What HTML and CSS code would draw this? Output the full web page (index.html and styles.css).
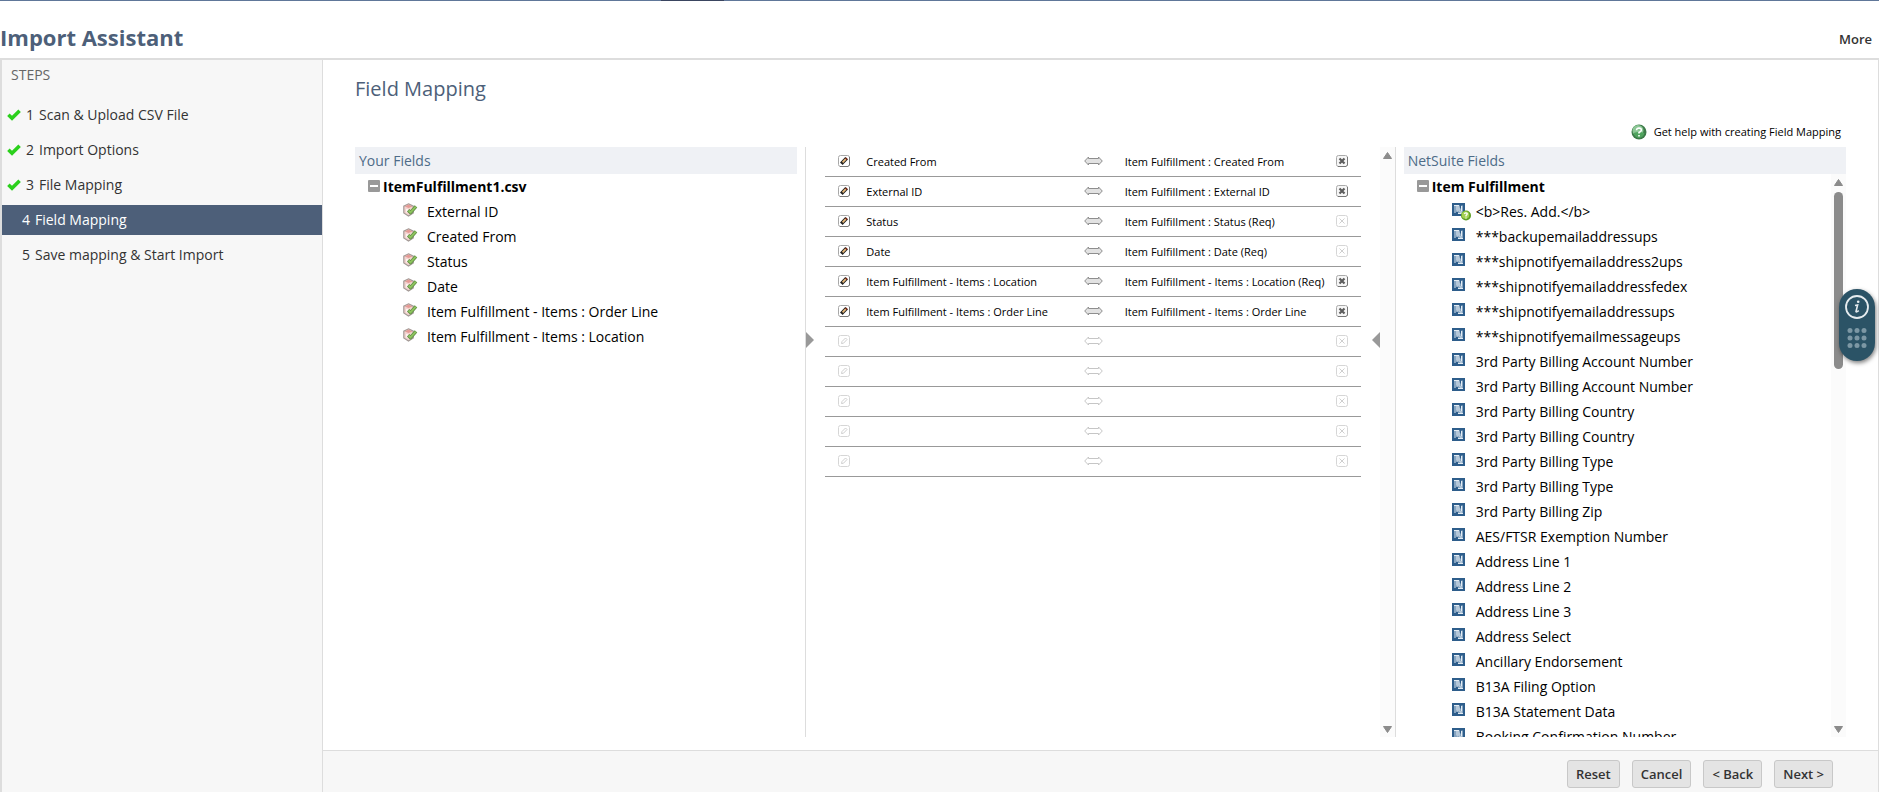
FILE: index.html
```html
<!DOCTYPE html>
<html lang="en">
<head>
    <meta charset="UTF-8">
    <title>Import Assistant</title>
    <link rel="stylesheet" href="styles.css">
</head>
<body>

    <!-- shared icons -->
    <svg class="sprite" width="0" height="0">
        <symbol id="check" viewBox="0 0 14 12">
            <path d="M1.4 5.8 L5 9.2 L12.6 1.8" fill="none" stroke="#2bd01c" stroke-width="3.6"/>
        </symbol>
        <symbol id="minus" viewBox="0 0 12 12">
            <rect width="12" height="12" rx="1" fill="#999"/>
            <rect x="2" y="5" width="8" height="2" fill="#fff"/>
        </symbol>
        <symbol id="mapped" viewBox="0 0 15 14">
            <path d="M5.5 .8 L10.3 3.2 V10 L5.5 13 L.8 10 V3.2 Z" fill="#f3d3cf" stroke="#a39a96" stroke-width="1.2"/>
            <path d="M1.8 3.6 L5.5 1.6 L9.4 3.6 L5.5 5 Z" fill="#e59a95"/>
            <path d="M4 6 V9.500" stroke="#fff" stroke-width="1.4"/>
            <path d="M5.200 7.200 L7.500 9.600 L13 3.400" fill="none" stroke="#5f8f45" stroke-width="3.400" stroke-linejoin="round"/>
            <path d="M5.600 7.500 L7.500 9.400 L12.800 3.600" fill="none" stroke="#8fc45f" stroke-width="1.800"/>
        </symbol>
        <symbol id="ns" viewBox="0 0 13 13">
            <rect width="13" height="13" fill="#2d5d8b"/>
            <path d="M2 2 H7 V4 L9 6 V2.500 H11 V11 H6 V9 L4 7 V10 H2 Z" fill="#86a4c0"/>
            <path d="M2 2.500 H7 V7.500 L10 10.500 M5 3 V9 M9.500 3 V8.500 M6 10.500 H11" fill="none" stroke="#e3ebf2"/>
        </symbol>
        <symbol id="ns-help" viewBox="0 0 19 18">
            <use href="#ns" width="13" height="13"/>
            <circle cx="14" cy="12.500" r="5" fill="#5d9e22"/>
            <circle cx="13.500" cy="12" r="3.800" fill="#a3d050"/>
            <path d="M12.200 10.800 Q14 9 15.200 10.500 Q15.300 11.600 14 12.600 V13.500 M14 14.500 V15.600" fill="none" stroke="#fff" stroke-width="1.3"/>
        </symbol>
        <symbol id="edit" viewBox="0 0 12 12">
            <rect x=".5" y=".5" width="11" height="11" rx="2" fill="#fff" stroke="#a8a8a8"/>
            <path d="M2 11.500 H10 L11.500 10 V2" fill="none" stroke="#777"/>
            <path d="M3.300 8.800 L8.600 3.200" stroke="#222" stroke-width="3.600"/>
            <path d="M4.600 7.400 L8 3.900" stroke="#e8b878" stroke-width="1.800"/>
            <path d="M7.600 3 L9.200 4.600" stroke="#7c1f10" stroke-width="1.400"/>
        </symbol>
        <symbol id="edit-off" viewBox="0 0 12 12">
            <rect x=".5" y=".5" width="11" height="11" rx="2" fill="#fff" stroke="#d6d6d6"/>
            <path d="M3.500 8.500 L4 6.500 L7.500 3 L9 4.500 L5.500 8.200 Z" fill="none" stroke="#cfcfcf"/>
        </symbol>
        <symbol id="arrows" viewBox="0 0 19 10">
            <path d="M.7 5 L4.500 1 V2.500 H14.500 V1 L18.300 5 L14.500 9 V7.500 H4.500 V9 Z" fill="#e2e2e2" stroke="#8e8e8e"/>
        </symbol>
        <symbol id="arrows-off" viewBox="0 0 19 10">
            <path d="M.7 5 L4.500 1 V2.500 H14.500 V1 L18.300 5 L14.500 9 V7.500 H4.500 V9 Z" fill="#fff" stroke="#c6c6c6"/>
        </symbol>
        <symbol id="remove" viewBox="0 0 12 12">
            <rect x=".5" y=".5" width="11" height="11" rx="2" fill="#f6f6f6" stroke="#aaa"/>
            <path d="M2 11.500 H10 L11.500 10 V2" fill="none" stroke="#777"/>
            <path d="M3.500 3.500 L8.500 8.500 M8.500 3.500 L3.500 8.500" stroke="#5c5c5c" stroke-width="2.200"/>
        </symbol>
        <symbol id="remove-off" viewBox="0 0 12 12">
            <rect x=".5" y=".5" width="11" height="11" rx="2" fill="#fff" stroke="#d6d6d6"/>
            <path d="M3.500 3.500 L8.500 8.500 M8.500 3.500 L3.500 8.500" stroke="#cfcfcf"/>
        </symbol>
        <symbol id="scroll-up" viewBox="0 0 9 7">
            <path d="M4.500 .5 L8.500 6.500 H.5 Z" fill="#8b8b8b" stroke="#8b8b8b" stroke-linejoin="round"/>
        </symbol>
        <symbol id="scroll-down" viewBox="0 0 9 7">
            <path d="M4.500 6.500 L8.500 .5 H.5 Z" fill="#8b8b8b" stroke="#8b8b8b" stroke-linejoin="round"/>
        </symbol>
    </svg>

    <div class="nav-strip"><div class="nav-active"></div></div>

    <header class="page-header">
        <h1>Import Assistant</h1>
        <a class="more" href="#">More</a>
    </header>

    <div class="assistant">
        <nav class="steps">
            <h2>STEPS</h2>
            <a class="step" href="#"><svg class="check"><use href="#check"/></svg><span>1</span>Scan &amp; Upload CSV File</a>
            <a class="step" href="#"><svg class="check"><use href="#check"/></svg><span>2</span>Import Options</a>
            <a class="step" href="#"><svg class="check"><use href="#check"/></svg><span>3</span>File Mapping</a>
            <a class="step todo active" href="#"><span>4</span>Field Mapping</a>
            <a class="step todo" href="#"><span>5</span>Save mapping &amp; Start Import</a>
        </nav>

        <div class="content">
            <main class="mapping">
                <h2 class="title">Field Mapping</h2>
                <a class="help" href="#">
                    <svg width="16" height="16" viewBox="0 0 16 16">
                        <circle cx="8" cy="8" r="7.5" fill="#3c7a48"/>
                        <circle cx="7" cy="6.500" r="5.500" fill="#8cc795"/>
                        <path d="M2.500 9 Q8 7 13.500 9 Q12.500 13.500 8 14 Q3.500 13.500 2.500 9" fill="#4fa35d"/>
                        <path d="M5.500 6.200 Q5.700 4 8 4 Q10.500 4.200 10.300 6.200 Q10 7.500 8 8.500 V9.600 M8 11 V12.600" fill="none" stroke="#fff" stroke-width="1.600"/>
                    </svg>
                    Get help with creating Field Mapping
                </a>

                <div class="columns">
                    <section class="panel">
                        <h3>Your Fields</h3>
                        <ul class="tree">
                            <li class="root"><svg class="toggle"><use href="#minus"/></svg>ItemFulfillment1.csv</li>
                            <li><svg class="mapped"><use href="#mapped"/></svg>External ID</li>
                            <li><svg class="mapped"><use href="#mapped"/></svg>Created From</li>
                            <li><svg class="mapped"><use href="#mapped"/></svg>Status</li>
                            <li><svg class="mapped"><use href="#mapped"/></svg>Date</li>
                            <li><svg class="mapped"><use href="#mapped"/></svg>Item Fulfillment - Items : Order Line</li>
                            <li><svg class="mapped"><use href="#mapped"/></svg>Item Fulfillment - Items : Location</li>
                        </ul>
                    </section>

                    <section class="map-panel">
                        <div class="map-body">
                            <table class="map">
                                <colgroup><col class="c-edit"><col><col class="c-arrow"><col class="c-target"><col class="c-remove"></colgroup>
                                <tr>
                                    <td><button aria-label="Edit"><svg><use href="#edit"/></svg></button></td>
                                    <td>Created From</td>
                                    <td><svg class="arrows"><use href="#arrows"/></svg></td>
                                    <td>Item Fulfillment : Created From</td>
                                    <td><button aria-label="Remove"><svg><use href="#remove"/></svg></button></td>
                                </tr>
                                <tr>
                                    <td><button aria-label="Edit"><svg><use href="#edit"/></svg></button></td>
                                    <td>External ID</td>
                                    <td><svg class="arrows"><use href="#arrows"/></svg></td>
                                    <td>Item Fulfillment : External ID</td>
                                    <td><button aria-label="Remove"><svg><use href="#remove"/></svg></button></td>
                                </tr>
                                <tr>
                                    <td><button aria-label="Edit"><svg><use href="#edit"/></svg></button></td>
                                    <td>Status</td>
                                    <td><svg class="arrows"><use href="#arrows"/></svg></td>
                                    <td>Item Fulfillment : Status (Req)</td>
                                    <td><button aria-label="Remove" disabled><svg><use href="#remove-off"/></svg></button></td>
                                </tr>
                                <tr>
                                    <td><button aria-label="Edit"><svg><use href="#edit"/></svg></button></td>
                                    <td>Date</td>
                                    <td><svg class="arrows"><use href="#arrows"/></svg></td>
                                    <td>Item Fulfillment : Date (Req)</td>
                                    <td><button aria-label="Remove" disabled><svg><use href="#remove-off"/></svg></button></td>
                                </tr>
                                <tr>
                                    <td><button aria-label="Edit"><svg><use href="#edit"/></svg></button></td>
                                    <td>Item Fulfillment - Items : Location</td>
                                    <td><svg class="arrows"><use href="#arrows"/></svg></td>
                                    <td>Item Fulfillment - Items : Location (Req)</td>
                                    <td><button aria-label="Remove"><svg><use href="#remove"/></svg></button></td>
                                </tr>
                                <tr>
                                    <td><button aria-label="Edit"><svg><use href="#edit"/></svg></button></td>
                                    <td>Item Fulfillment - Items : Order Line</td>
                                    <td><svg class="arrows"><use href="#arrows"/></svg></td>
                                    <td>Item Fulfillment - Items : Order Line</td>
                                    <td><button aria-label="Remove"><svg><use href="#remove"/></svg></button></td>
                                </tr>
                                <tr>
                                    <td><button aria-label="Edit" disabled><svg><use href="#edit-off"/></svg></button></td>
                                    <td></td>
                                    <td><svg class="arrows"><use href="#arrows-off"/></svg></td>
                                    <td></td>
                                    <td><button aria-label="Remove" disabled><svg><use href="#remove-off"/></svg></button></td>
                                </tr>
                                <tr>
                                    <td><button aria-label="Edit" disabled><svg><use href="#edit-off"/></svg></button></td>
                                    <td></td>
                                    <td><svg class="arrows"><use href="#arrows-off"/></svg></td>
                                    <td></td>
                                    <td><button aria-label="Remove" disabled><svg><use href="#remove-off"/></svg></button></td>
                                </tr>
                                <tr>
                                    <td><button aria-label="Edit" disabled><svg><use href="#edit-off"/></svg></button></td>
                                    <td></td>
                                    <td><svg class="arrows"><use href="#arrows-off"/></svg></td>
                                    <td></td>
                                    <td><button aria-label="Remove" disabled><svg><use href="#remove-off"/></svg></button></td>
                                </tr>
                                <tr>
                                    <td><button aria-label="Edit" disabled><svg><use href="#edit-off"/></svg></button></td>
                                    <td></td>
                                    <td><svg class="arrows"><use href="#arrows-off"/></svg></td>
                                    <td></td>
                                    <td><button aria-label="Remove" disabled><svg><use href="#remove-off"/></svg></button></td>
                                </tr>
                                <tr>
                                    <td><button aria-label="Edit" disabled><svg><use href="#edit-off"/></svg></button></td>
                                    <td></td>
                                    <td><svg class="arrows"><use href="#arrows-off"/></svg></td>
                                    <td></td>
                                    <td><button aria-label="Remove" disabled><svg><use href="#remove-off"/></svg></button></td>
                                </tr>
                            </table>
                            <span class="pointer left"></span>
                            <span class="pointer right"></span>
                        </div>
                        <div class="scrollbar">
                            <svg><use href="#scroll-up"/></svg>
                            <svg><use href="#scroll-down"/></svg>
                        </div>
                    </section>

                    <section class="panel">
                        <h3>NetSuite Fields</h3>
                        <div class="scroll-box">
                            <ul class="tree">
                                <li class="root"><svg class="toggle"><use href="#minus"/></svg>Item Fulfillment</li>
                                <li><svg class="ns-help"><use href="#ns-help"/></svg>&lt;b&gt;Res. Add.&lt;/b&gt;</li>
                                <li><svg class="ns"><use href="#ns"/></svg>***backupemailaddressups</li>
                                <li><svg class="ns"><use href="#ns"/></svg>***shipnotifyemailaddress2ups</li>
                                <li><svg class="ns"><use href="#ns"/></svg>***shipnotifyemailaddressfedex</li>
                                <li><svg class="ns"><use href="#ns"/></svg>***shipnotifyemailaddressups</li>
                                <li><svg class="ns"><use href="#ns"/></svg>***shipnotifyemailmessageups</li>
                                <li><svg class="ns"><use href="#ns"/></svg>3rd Party Billing Account Number</li>
                                <li><svg class="ns"><use href="#ns"/></svg>3rd Party Billing Account Number</li>
                                <li><svg class="ns"><use href="#ns"/></svg>3rd Party Billing Country</li>
                                <li><svg class="ns"><use href="#ns"/></svg>3rd Party Billing Country</li>
                                <li><svg class="ns"><use href="#ns"/></svg>3rd Party Billing Type</li>
                                <li><svg class="ns"><use href="#ns"/></svg>3rd Party Billing Type</li>
                                <li><svg class="ns"><use href="#ns"/></svg>3rd Party Billing Zip</li>
                                <li><svg class="ns"><use href="#ns"/></svg>AES/FTSR Exemption Number</li>
                                <li><svg class="ns"><use href="#ns"/></svg>Address Line 1</li>
                                <li><svg class="ns"><use href="#ns"/></svg>Address Line 2</li>
                                <li><svg class="ns"><use href="#ns"/></svg>Address Line 3</li>
                                <li><svg class="ns"><use href="#ns"/></svg>Address Select</li>
                                <li><svg class="ns"><use href="#ns"/></svg>Ancillary Endorsement</li>
                                <li><svg class="ns"><use href="#ns"/></svg>B13A Filing Option</li>
                                <li><svg class="ns"><use href="#ns"/></svg>B13A Statement Data</li>
                                <li><svg class="ns"><use href="#ns"/></svg>Booking Confirmation Number</li>
                            </ul>
                            <div class="scrollbar">
                                <svg><use href="#scroll-up"/></svg>
                                <div class="thumb"></div>
                                <svg><use href="#scroll-down"/></svg>
                            </div>
                        </div>
                    </section>
                </div>
            </main>

            <footer class="actions">
                <button>Reset</button>
                <button>Cancel</button>
                <button>&lt; Back</button>
                <button>Next &gt;</button>
            </footer>
        </div>
    </div>

    <button class="info-widget" aria-label="Information">
        <svg width="24" height="24" viewBox="0 0 24 24">
            <circle cx="12" cy="12" r="11" fill="none" stroke="#e6ecef" stroke-width="1.8"/>
            <path d="M10 10.500 L12.600 10 L11 16.500 Q11.200 17.500 13.800 15.600" fill="none" stroke="#e6ecef" stroke-width="1.600"/>
            <circle cx="13.200" cy="6.800" r="1.300" fill="#e6ecef"/>
        </svg>
        <svg width="20" height="20" viewBox="0 0 20 20" fill="#7c97a4">
            <circle cx="3" cy="2.500" r="2.500"/><circle cx="10" cy="2.500" r="2.500"/><circle cx="17" cy="2.500" r="2.500"/>
            <circle cx="3" cy="10" r="2.500"/><circle cx="10" cy="10" r="2.500"/><circle cx="17" cy="10" r="2.500"/>
            <circle cx="3" cy="17.500" r="2.500"/><circle cx="10" cy="17.500" r="2.500"/><circle cx="17" cy="17.500" r="2.500"/>
        </svg>
    </button>

</body>
</html>
```

FILE: styles.css
```css
* {
    box-sizing: border-box;
}

body {
    display: flex;
    flex-direction: column;
    height: 100vh;
    margin: 0;
    overflow: hidden;
    font-family: 'Open Sans', 'Noto Sans', sans-serif;
    font-size: 14px;
    color: #000;
    background: #fff;
}

h1, h2, h3, ul {
    margin: 0;
    padding: 0;
}

a {
    color: inherit;
    text-decoration: none;
}

svg {
    display: block;
    flex: none;
}

button {
    font-family: inherit;
    cursor: pointer;
}

.sprite {
    position: absolute;
}

.nav-strip {
    flex: none;
    height: 1px;
    padding-left: 661px;
    background: #607799;
}

.nav-active {
    width: 63px;
    height: 1px;
    background: #3a4560;
}

.page-header {
    display: flex;
    flex: none;
    justify-content: space-between;
    align-items: center;
    height: 59px;
    padding: 14px 7px 0 0;
    border-bottom: 2px solid #ddd;
}

.page-header h1 {
    font-size: 22px;
    line-height: 30px;
    font-weight: 700;
    color: #4d5f79;
}

.more {
    padding-top: 4px;
    font-size: 13px;
    font-weight: 600;
    color: #333;
}

.assistant {
    display: flex;
    flex: 1;
    min-height: 0;
    border-left: 2px solid #ddd;
    border-right: 1px solid #ddd;
}

/* left menu */
.steps {
    display: flex;
    flex-direction: column;
    flex: none;
    gap: 5px;
    width: 321px;
    background: #f7f7f7;
    border-right: 1px solid #ddd;
}

.steps h2 {
    height: 35px;
    padding-left: 9px;
    font-size: 14px;
    line-height: 30px;
    font-weight: 400;
    color: #666;
}

.step {
    display: flex;
    align-items: center;
    gap: 5px;
    height: 30px;
    padding-left: 5px;
    line-height: 30px;
    color: #333;
}

.step span {
    width: 8px;
}

.step.todo {
    padding-left: 20px;
}

.step.active {
    color: #fff;
    background: #4d5f79;
}

.check {
    width: 14px;
    height: 12px;
}

/* right side */
.content {
    display: flex;
    flex-direction: column;
    flex: 1;
    min-width: 0;
}

.mapping {
    display: flex;
    flex-direction: column;
    flex: 1;
    min-height: 0;
    padding: 14px 32px 13px;
}

.title {
    font-size: 20px;
    line-height: 30px;
    font-weight: 400;
    color: #4d5f79;
}

.help {
    display: flex;
    align-self: flex-end;
    align-items: center;
    gap: 7px;
    margin: 18px 0 5px;
    padding-right: 5px;
    font-size: 11px;
    line-height: 20px;
}

.columns {
    display: grid;
    grid-template-columns: calc(30% - 5px) 1fr calc(30% - 5px);
    grid-template-rows: minmax(0, 1fr);
    gap: 8px;
    flex: 1;
    min-height: 0;
}

.panel {
    display: flex;
    flex-direction: column;
    min-width: 0;
}

.panel h3 {
    flex: none;
    padding-left: 4px;
    font-size: 14px;
    line-height: 27px;
    font-weight: 400;
    color: #4d6b88;
    background: #eff1f5;
}

.scroll-box {
    display: flex;
    flex: 1;
    min-height: 0;
    overflow: hidden;
}

.tree {
    flex: 1;
    list-style: none;
}

.tree li {
    display: flex;
    height: 25px;
    padding-left: 48px;
    line-height: 25px;
    white-space: nowrap;
}

.tree .root {
    padding-left: 13px;
    font-weight: 700;
}

.toggle {
    width: 12px;
    height: 12px;
    margin: 6px 3px 0 0;
}

.mapped {
    width: 15px;
    height: 14px;
    margin: 4px 9px 0 0;
}

.ns {
    width: 13px;
    height: 13px;
    margin: 4px 11px 0 0;
}

.ns-help {
    width: 19px;
    height: 18px;
    margin: 4px 5px 0 0;
}

/* mapping table */
.map-panel {
    display: flex;
    border-left: 1px solid #ddd;
    border-right: 1px solid #ddd;
}

.map-body {
    position: relative;
    flex: 1;
    padding: 0 19px;
}

.map {
    width: 100%;
    table-layout: fixed;
    border-collapse: separate;
    border-spacing: 0;
    font-size: 11px;
}

.map td {
    height: 30px;
    padding: 0;
    line-height: 29px;
    white-space: nowrap;
    border-bottom: 1px solid #999;
}

.map .c-edit, .map .c-arrow {
    width: 41px;
}

.map .c-target {
    width: 211px;
}

.map .c-remove {
    width: 25px;
}

.map button {
    display: block;
    padding: 0 0 2px;
    background: none;
    border: none;
}

.map td:first-child {
    padding-left: 13px;
}

.map button svg {
    width: 12px;
    height: 12px;
}

.map .arrows {
    width: 19px;
    height: 10px;
    margin-bottom: 2px;
}

.pointer {
    position: absolute;
    top: 185px;
    border-top: 8px solid transparent;
    border-bottom: 8px solid transparent;
}

.pointer.left {
    left: 0;
    border-left: 8px solid #999;
}

.pointer.right {
    right: 0;
    border-right: 8px solid #999;
}

.scrollbar {
    display: flex;
    flex-direction: column;
    flex: none;
    align-items: center;
    justify-content: space-between;
    width: 15px;
    padding: 5px 0 4px;
    background: #fbfbfb;
}

.scrollbar svg {
    width: 9px;
    height: 7px;
}

.thumb {
    width: 9px;
    height: 177px;
    margin: 6px 0 auto;
    border-radius: 5px;
    background: #8b8b8b;
}

.actions {
    display: flex;
    flex: none;
    justify-content: flex-end;
    gap: 12px;
    height: 42px;
    padding: 9px 45px 0 0;
    background: #f7f7f7;
    border-top: 1px solid #ddd;
}

.actions button {
    height: 28px;
    padding: 0 8px;
    font-size: 13px;
    font-weight: 600;
    color: #333;
    background: #e4e4e4;
    border: 1px solid #c8c8c8;
    border-radius: 3px;
}

.info-widget {
    position: fixed;
    top: 289px;
    right: 4px;
    display: flex;
    flex-direction: column;
    align-items: center;
    gap: 9px;
    width: 36px;
    height: 72px;
    padding: 6px 0 0;
    background: #2b5366;
    border: none;
    border-radius: 18px;
    box-shadow: 1px 2px 4px rgba(0, 0, 0, 0.5);
}
```
